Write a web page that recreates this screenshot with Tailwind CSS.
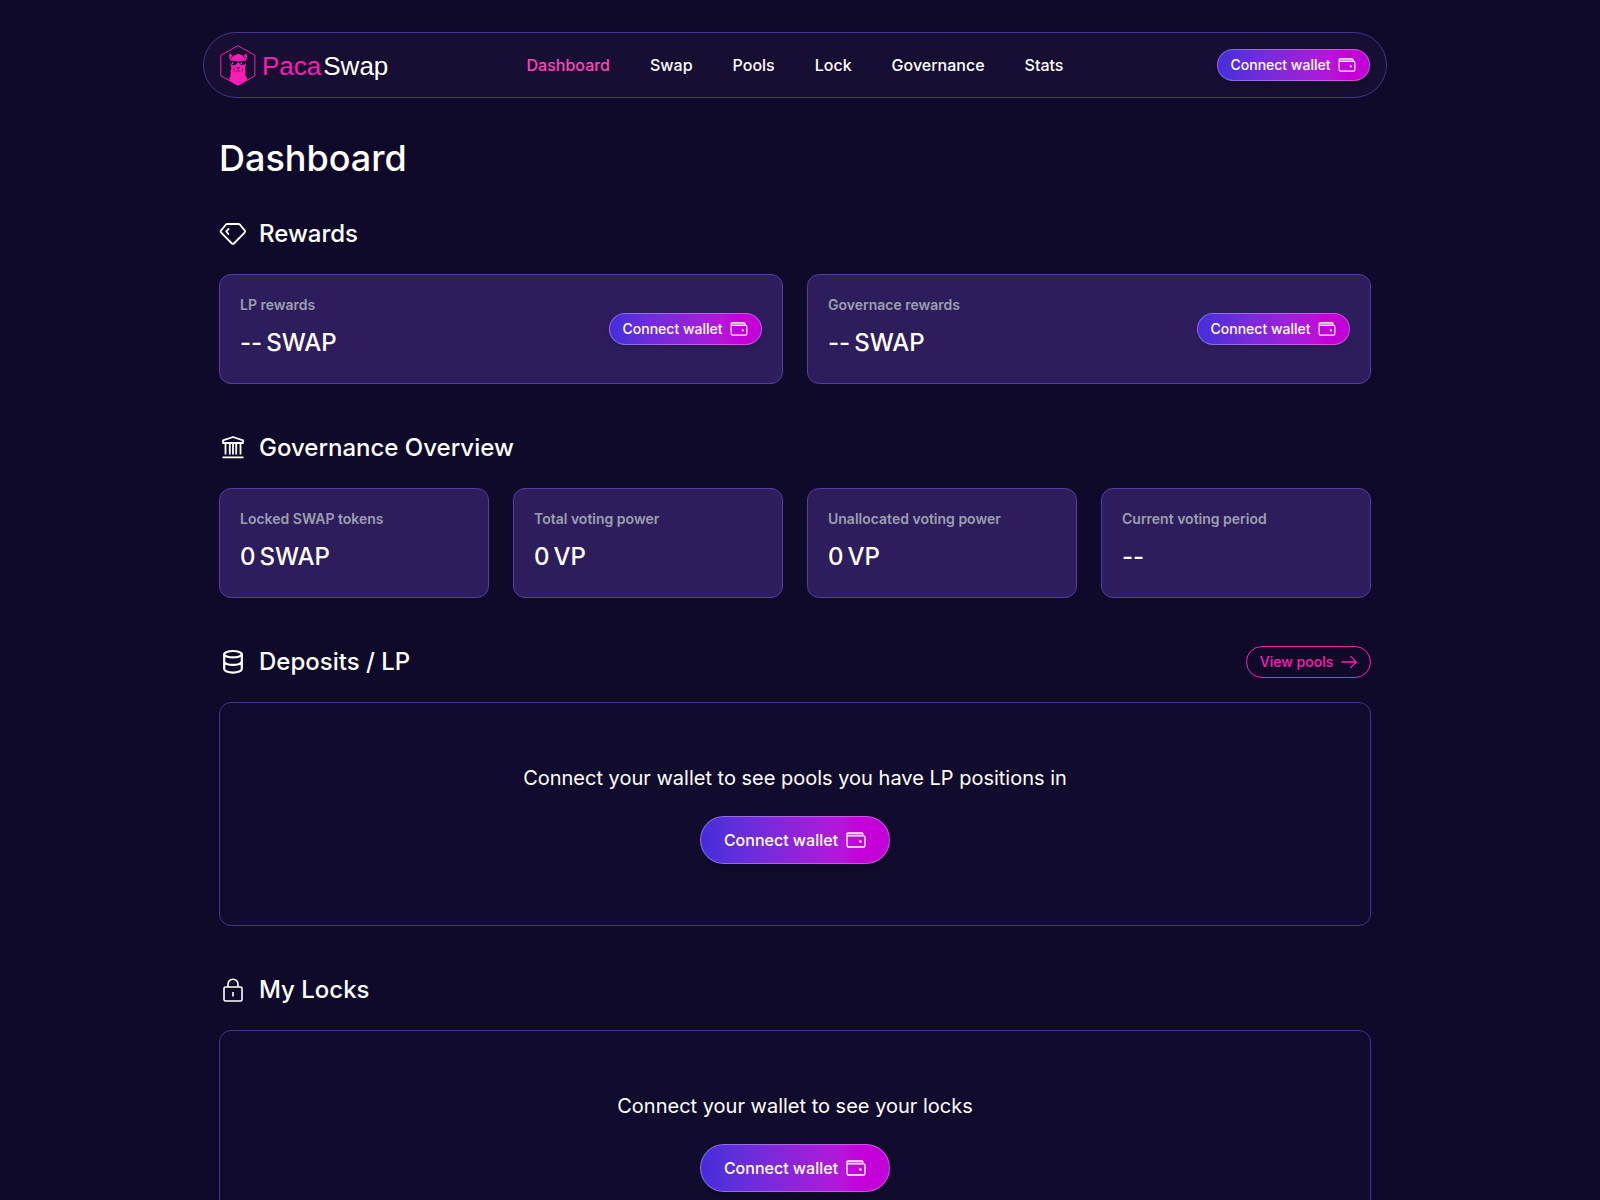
<!DOCTYPE html>
<html lang="en">
<head>
<meta charset="utf-8">
<meta name="viewport" content="width=device-width, initial-scale=1">
<title>PacaSwap</title>
<script src="https://cdn.jsdelivr.net/npm/@tailwindcss/browser@4"></script>
</head>
<body class="min-h-screen bg-[#100a2a] pr-[10px] font-[Inter,sans-serif] text-white">
<svg class="hidden" aria-hidden="true">
  <symbol id="wallet" viewBox="0 0 20 16">
    <path d="M1 2.6V13.4a1.6 1.6 0 0 0 1.6 1.6h14.8a1.6 1.6 0 0 0 1.6-1.6V5.4a1.6 1.6 0 0 0-1.6-1.6H2.2A1.3 1.3 0 0 1 2.2 1h13.4a1.4 1.4 0 0 1 1.4 1.4v1.4" fill="none" stroke="currentColor" stroke-width="1.3"/>
    <path d="M1.5 1.2h15v2.4h-15z" fill="currentColor" opacity=".35"/>
    <circle cx="14.4" cy="9.6" r="1.3" fill="currentColor"/>
  </symbol>
</svg>

<header class="mx-auto mt-8 flex h-[66px] max-w-[1184px] items-center justify-between rounded-full border border-[#43348c] bg-[#170e33] px-4">
  <a href="#" class="flex w-[325px] items-center gap-[6px] font-['Liberation_Sans',sans-serif] text-[26px] leading-8">
    <svg class="h-[41px] w-9" viewBox="14 13 108 124" aria-hidden="true">
      <path d="M68 15 119 44V106L68 135 16 106V44Z" fill="none" stroke="#ff1cb4" stroke-width="3"/>
      <path d="M43 38Q51 42 53 50Q55 42 62 43Q68 37 74 42Q81 41 84 50Q86 42 93 38Q98 51 91 60L92 72Q89 78 89 84Q92 92 90 100Q91 108 95 113V119L68 135 42 120V113Q47 107 46 99Q44 91 48 84Q48 78 45 72L46 60Q38 50 43 38Z" fill="#ff1cb4"/>
      <path d="M46 45Q50 50 49 56Q45 51 46 45ZM90 45Q86 50 87 56Q91 51 90 45Z" fill="#170e33"/>
      <path d="M43 61Q55 60 68 63 81 60 93 61L92 65Q90 74 81 74 73 74 71 66H66Q64 74 55 74 46 74 45 65Z" fill="#170e33"/>
      <path d="M49 68l6-4-3 7ZM75 68l6-4-3 7Z" fill="#a39bb0"/>
      <path d="M64 81h9l-4 5ZM68 86v4M62 92q4 2 6-2q3 4 7 2M57 82q-4 6 0 12M80 82q4 6 0 12" fill="none" stroke="#170e33" stroke-width="1.8"/>
    </svg>
    <span class="flex gap-[2px] pt-[2px]"><span class="text-[#ff1cb4]">Paca</span><span>Swap</span></span>
  </a>
  <nav class="flex gap-10 text-base font-medium">
    <a href="#" class="text-[#ff45bd]">Dashboard</a>
    <a href="#">Swap</a>
    <a href="#">Pools</a>
    <a href="#">Lock</a>
    <a href="#">Governance</a>
    <a href="#">Stats</a>
  </nav>
  <div class="flex w-[325px] justify-end">
    <button class="flex h-8 w-[153px] items-center justify-center gap-2 rounded-full border border-white/30 bg-linear-to-r from-[#432ddb] via-[#9023da] to-[#c400d9] to-85% text-sm font-medium shadow-md">Connect wallet <svg class="h-[14px] w-[18px]" aria-hidden="true"><use href="#wallet"/></svg></button>
  </div>
</header>

<main class="mx-auto max-w-[1184px] px-4 pt-10 pb-16">
  <h1 class="text-4xl leading-10 font-medium">Dashboard</h1>

  <section class="mt-10">
    <h2 class="flex h-8 items-center gap-3 text-2xl font-medium">
      <svg class="h-7 w-7" viewBox="0 0 28 28" fill="none" stroke="currentColor" stroke-width="1.8" stroke-linejoin="round" stroke-linecap="round" aria-hidden="true"><path d="M8.2 4h11.2a2 2 0 0 1 1.5.7l4.8 5.7a1.6 1.6 0 0 1-.1 2.2L14.9 23.5a1.4 1.4 0 0 1-2 0L2.2 12.7a1.6 1.6 0 0 1-.1-2.3l4.7-5.7A2 2 0 0 1 8.2 4ZM9.6 9 7.2 11.3 9.4 14"/></svg>
      Rewards
    </h2>
    <div class="mt-6 grid grid-cols-2 gap-6">
      <div class="flex min-h-[110px] justify-between rounded-xl border border-[#5140a3] bg-[#2e1d5c] p-5">
        <div>
          <p class="text-sm font-semibold text-[#9ba0ae]">LP rewards</p>
          <p class="mt-3 flex gap-1 text-2xl font-medium"><span>--</span><span>SWAP</span></p>
        </div>
        <button class="flex h-8 w-[153px] items-center justify-center gap-2 self-center rounded-full border border-white/30 bg-linear-to-r from-[#432ddb] via-[#9023da] to-[#c400d9] to-85% text-sm font-medium shadow-md">Connect wallet <svg class="h-[14px] w-[18px]" aria-hidden="true"><use href="#wallet"/></svg></button>
      </div>
      <div class="flex min-h-[110px] justify-between rounded-xl border border-[#5140a3] bg-[#2e1d5c] p-5">
        <div>
          <p class="text-sm font-semibold text-[#9ba0ae]">Governace rewards</p>
          <p class="mt-3 flex gap-1 text-2xl font-medium"><span>--</span><span>SWAP</span></p>
        </div>
        <button class="flex h-8 w-[153px] items-center justify-center gap-2 self-center rounded-full border border-white/30 bg-linear-to-r from-[#432ddb] via-[#9023da] to-[#c400d9] to-85% text-sm font-medium shadow-md">Connect wallet <svg class="h-[14px] w-[18px]" aria-hidden="true"><use href="#wallet"/></svg></button>
      </div>
    </div>
  </section>

  <section class="mt-12">
    <h2 class="flex h-8 items-center gap-3 text-2xl font-medium">
      <svg class="h-7 w-7" viewBox="0 0 28 28" fill="none" stroke="currentColor" stroke-width="1.8" stroke-linejoin="round" aria-hidden="true"><path d="M4 6.4 14 3 24 6.4V9H4ZM6.5 9V20.5M10.8 9V20.5M14 9V20.5M17.2 9V20.5M21.5 9V20.5M3.5 23.3H24.5"/></svg>
      Governance Overview
    </h2>
    <div class="mt-6 grid grid-cols-4 gap-6">
      <div class="min-h-[110px] rounded-xl border border-[#5140a3] bg-[#2e1d5c] p-5">
        <p class="text-sm font-semibold text-[#9ba0ae]">Locked SWAP tokens</p>
        <p class="mt-3 flex gap-1 text-2xl font-medium"><span>0</span><span>SWAP</span></p>
      </div>
      <div class="min-h-[110px] rounded-xl border border-[#5140a3] bg-[#2e1d5c] p-5">
        <p class="text-sm font-semibold text-[#9ba0ae]">Total voting power</p>
        <p class="mt-3 flex gap-1 text-2xl font-medium"><span>0</span><span>VP</span></p>
      </div>
      <div class="min-h-[110px] rounded-xl border border-[#5140a3] bg-[#2e1d5c] p-5">
        <p class="text-sm font-semibold text-[#9ba0ae]">Unallocated voting power</p>
        <p class="mt-3 flex gap-1 text-2xl font-medium"><span>0</span><span>VP</span></p>
      </div>
      <div class="min-h-[110px] rounded-xl border border-[#5140a3] bg-[#2e1d5c] p-5">
        <p class="text-sm font-semibold text-[#9ba0ae]">Current voting period</p>
        <p class="mt-3 text-2xl font-medium">--</p>
      </div>
    </div>
  </section>

  <section class="mt-12">
    <div class="flex h-8 items-center justify-between">
      <h2 class="flex items-center gap-3 text-2xl font-medium">
        <svg class="h-7 w-7" viewBox="0 0 28 28" fill="none" stroke="currentColor" stroke-width="2.2" aria-hidden="true"><ellipse cx="14" cy="6.2" rx="8.8" ry="3.2"/><path d="M5.2 6.2V21c0 2 3.9 3.6 8.8 3.6s8.8-1.6 8.8-3.6V6.2M5.2 13.6c0 1.8 3.9 3.3 8.8 3.3s8.8-1.5 8.8-3.3"/></svg>
        Deposits / LP
      </h2>
      <a href="#" class="flex h-8 w-[125px] items-center justify-center gap-2 rounded-full border border-[#ff1cb4] text-sm font-medium text-[#ff1cb4]">View pools <svg class="h-4 w-4" viewBox="0 0 16 16" fill="none" stroke="currentColor" stroke-width="1.3" stroke-linecap="round" stroke-linejoin="round" aria-hidden="true"><path d="M.8 8H15.2M9.6 2.4 15.2 8 9.6 13.6"/></svg></a>
    </div>
    <div class="mt-6 flex min-h-56 flex-col items-center justify-center gap-6 rounded-xl border border-[#43348c] bg-[#110b2d]">
      <p class="text-xl">Connect your wallet to see pools you have LP positions in</p>
      <button class="flex h-12 w-[190px] items-center justify-center gap-2 rounded-full border border-white/30 bg-linear-to-r from-[#432ddb] via-[#9023da] to-[#c400d9] to-85% text-base font-medium shadow-lg">Connect wallet <svg class="h-4 w-5" aria-hidden="true"><use href="#wallet"/></svg></button>
    </div>
  </section>

  <section class="mt-12">
    <h2 class="flex h-8 items-center gap-3 text-2xl font-medium">
      <svg class="h-7 w-7" viewBox="0 0 28 28" fill="none" stroke="currentColor" stroke-width="1.6" aria-hidden="true"><rect x="5" y="11" width="18" height="14" rx="1.6"/><path d="M9 11V8.2a5 5 0 0 1 10 0V11M14 16V20.5"/></svg>
      My Locks
    </h2>
    <div class="mt-6 flex min-h-56 flex-col items-center justify-center gap-6 rounded-xl border border-[#43348c] bg-[#110b2d]">
      <p class="text-xl">Connect your wallet to see your locks</p>
      <button class="flex h-12 w-[190px] items-center justify-center gap-2 rounded-full border border-white/30 bg-linear-to-r from-[#432ddb] via-[#9023da] to-[#c400d9] to-85% text-base font-medium shadow-lg">Connect wallet <svg class="h-4 w-5" aria-hidden="true"><use href="#wallet"/></svg></button>
    </div>
  </section>
</main>
</body>
</html>
